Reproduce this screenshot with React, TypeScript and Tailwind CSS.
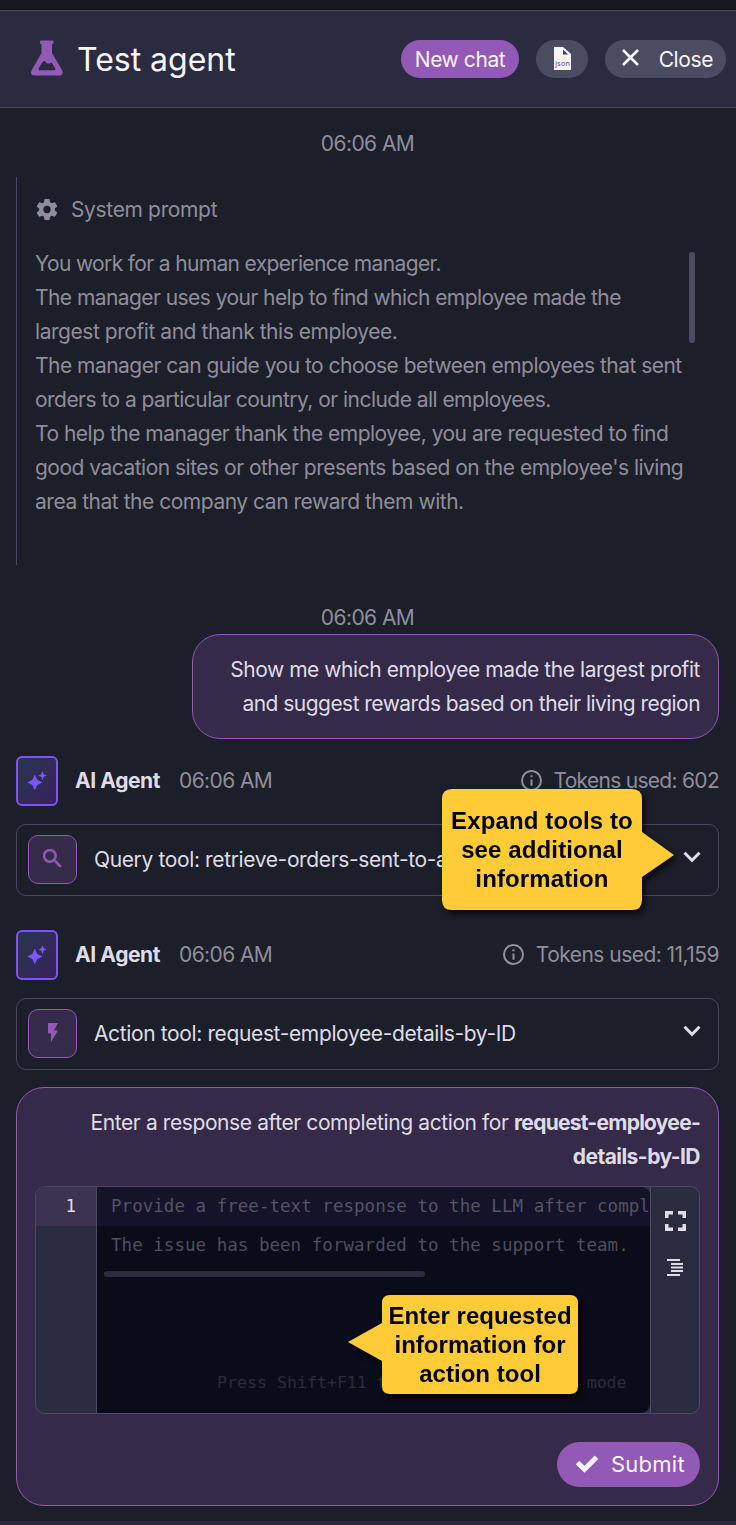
import type { ReactNode } from "react";

function Flask() {
  return (
    <svg viewBox="0 0 32 36" className="h-9 w-8" fill="#9259b6">
      <path
        fillRule="evenodd"
        d="M10 .5h11.500q1 0 1 1v1.700q0 .8-1 .8h-.5v9l10.200 17.500q1.600 5-3.200 5H3.500q-5 0-3-5L10.500 13V4h-.7q-.8 0-.8-.8V1.500q0-1 1-1zM13.300 21q-.9 0-1.600 1.100l-3.900 6q-.9 2.200.9 2.200h14.300q1.900 0 1-2.200l-3-4.900q-.7-1.100-1.500-.2-1.300 1.400-2.500.3-1.800.4-2.200-1.200-.5-1.100-1.500-1.100z"
      />
    </svg>
  );
}

function Gear() {
  return (
    <svg viewBox="2 2 20 20" className="ml-px h-[21px] w-[22px] shrink-0" fill="#908d9c">
      <path d="M12 15.5A3.500 3.500 0 0 1 8.500 12 3.500 3.500 0 0 1 12 8.500a3.500 3.500 0 0 1 3.500 3.500 3.500 3.500 0 0 1-3.500 3.500m7.430-2.530c.04-.32.07-.64.07-.97s-.03-.66-.07-1l2.110-1.630c.19-.15.24-.42.12-.64l-2-3.460c-.12-.22-.39-.31-.61-.22l-2.490 1c-.52-.39-1.060-.73-1.690-.98l-.37-2.650A.506.506 0 0 0 14 2h-4c-.25 0-.46.18-.5.42l-.37 2.650c-.63.25-1.170.59-1.690.98l-2.490-1c-.22-.09-.49 0-.61.22l-2 3.460c-.13.22-.07.49.12.64L4.570 11c-.04.34-.07.67-.07 1s.03.65.07.97l-2.110 1.660c-.19.15-.25.42-.12.64l2 3.460c.12.22.39.3.61.22l2.490-1.010c.52.4 1.060.74 1.690.99l.37 2.650c.04.24.25.42.5.42h4c.25 0 .46-.18.5-.42l.37-2.650c.63-.26 1.170-.59 1.690-.99l2.490 1.010c.22.08.49 0 .61-.22l2-3.460c.12-.22.07-.49-.12-.64z" />
    </svg>
  );
}

function Info() {
  return (
    <svg viewBox="2 2 20 20" className="mb-0.5 h-[21px] w-[21px]" fill="#908d9c">
      <path d="M11 9h2V7h-2m1 13c-4.410 0-8-3.590-8-8s3.590-8 8-8 8 3.590 8 8-3.590 8-8 8m0-18A10 10 0 0 0 2 12a10 10 0 0 0 10 10 10 10 0 0 0 10-10A10 10 0 0 0 12 2m-1 15h2v-6h-2z" />
    </svg>
  );
}

function AgentRow({ tokens }: { tokens: ReactNode }) {
  return (
    <div className="flex h-[50px] items-center">
      <div className="flex h-[50px] w-[42px] items-center justify-center rounded-[6px] border-2 border-[#7b55fb] bg-linear-to-br from-[#263551] to-[#38205a]">
        <svg viewBox="0 0 20 20" className="h-5 w-5" fill="#7b55fb">
          <path d="M7.800 3.500L10.300 9L15.500 11.500L10.300 13.900L7.800 19.300L5.300 13.900L.2 11.500L5.300 9zM15.500.2L16.800 3.200L19.800 4.500L16.800 5.800L15.500 8.900L14.200 5.800L11.200 4.500L14.200 3.200z" />
        </svg>
      </div>
      <span className="ml-[17px] w-[104px] text-[21px] font-bold tracking-[-0.4px] text-[#dfdce8]">AI Agent</span>
      <span className="text-[21px] tracking-[-0.6px]">06:06 AM</span>
      <div className="ml-auto flex items-center gap-3">
        <Info />
        {tokens}
      </div>
    </div>
  );
}

function ToolCard({ icon, label }: { icon: ReactNode; label: string }) {
  return (
    <div className="flex h-[72px] items-center rounded-[10px] border border-[#484860] pr-[17px] pl-[11px]">
      <div className="mb-0.5 flex h-[49px] w-[49px] shrink-0 items-center justify-center rounded-[10px] border border-[#9259b6] bg-[#352a48] pb-0.5">
        {icon}
      </div>
      <span className="ml-[17px] text-[21px] tracking-[-0.37px] whitespace-nowrap text-[#dfdce8]">{label}</span>
      <svg viewBox="0 0 18 12" className="mb-[7px] ml-auto h-3 w-[18px]" fill="none" stroke="#dfdce8" strokeWidth="3">
        <path d="M1.500 1.800L9 9.300L16.500 1.800" />
      </svg>
    </div>
  );
}

const promptLines = [
  { text: "You work for a human experience manager.", track: "tracking-[-0.65px]" },
  { text: "The manager uses your help to find which employee made the", track: "tracking-[-0.56px]" },
  { text: "largest profit and thank this employee.", track: "tracking-[-0.45px]" },
  { text: "The manager can guide you to choose between employees that sent", track: "tracking-[-0.52px]" },
  { text: "orders to a particular country, or include all employees.", track: "tracking-[-0.54px]" },
  { text: "To help the manager thank the employee, you are requested to find", track: "tracking-[-0.5px]" },
  { text: "good vacation sites or other presents based on the employee's living", track: "tracking-[-0.51px]" },
  { text: "area that the company can reward them with.", track: "tracking-[-0.47px]" },
];

export default function App() {
  return (
    <div className="relative flex h-[1525px] w-[736px] flex-col overflow-hidden bg-[#1c1e29] font-['Inter',sans-serif] text-[#908d9c]">
      <div className="h-2.5 shrink-0 bg-[#141620]" />
      <header className="flex h-[98px] shrink-0 items-center border-y border-[#484860] bg-[#2b2b3f] pr-2.5 pl-[31px] text-[#f7f4fc]">
        <div className="mb-0.5"><Flask /></div>
        <h1 className="mt-0.5 ml-3.5 text-[32px] leading-10 tracking-[-0.02px]">Test agent</h1>
        <button className="ml-auto h-[38px] w-[118px] rounded-full bg-[#9259b6] pt-px text-[21px] tracking-[-0.42px]">New chat</button>
        <button className="ml-[17px] flex h-[38px] w-[52px] items-center justify-center rounded-full bg-[#4b4b62]">
          <svg viewBox="0 0 17 23" className="mb-0.5 h-[23px] w-[17px]">
            <path d="M0 0h9l8 7v16H0z" fill="#f7f4fc" />
            <path d="M9 2.500v5h5z" fill="#3c3b5b" />
            <text x="1.300" y="18.500" fontSize="7" fontFamily="Noto Sans, sans-serif" fill="#4b4b62" textLength="14.500">json</text>
          </svg>
        </button>
        <button className="ml-[17px] flex h-[38px] w-[121px] items-center rounded-full bg-[#4b4b62] pr-[13px] pl-[17px]">
          <svg viewBox="0 0 17 17" className="mb-1 h-[17px] w-[17px]" stroke="#f7f4fc" strokeWidth="2.600">
            <path d="M1 1L16 16M16 1L1 16" />
          </svg>
          <span className="ml-auto pt-px text-[21px] tracking-[-0.4px]">Close</span>
        </button>
      </header>

      <main className="flex flex-col pr-[17px] pl-4 text-[21px] leading-[34px]">
        <div className="mt-[19px] h-[34px] text-center tracking-[-0.55px]">06:06 AM</div>

        <section className="mt-4 h-[388px] border-l border-[#484860] pr-[24px] pl-[18px]">
          <div className="flex h-[69px] items-center pb-1">
            <Gear />
            <span className="ml-[13px] tracking-[-0.35px]">System prompt</span>
          </div>
          <div className="flex justify-between">
            <div className="pt-px whitespace-nowrap">
              {promptLines.map((l) => (
                <div key={l.text} className={l.track}>{l.text}</div>
              ))}
            </div>
            <div className="mt-1.5 h-[91px] w-1.5 shrink-0 rounded-full bg-[#4b4b62]" />
          </div>
        </section>

        <div className="mt-9 h-[33px] text-center tracking-[-0.55px]">06:06 AM</div>
        <div className="h-[105px] w-[527px] self-end rounded-[28px] border border-[#9259b6] bg-[#352a48] pt-[18px] pr-[18px] text-right text-[#dfdce8]">
          <div className="tracking-[-0.44px]">Show me which employee made the largest profit</div>
          <div className="tracking-[-0.54px]">and suggest rewards based on their living region</div>
        </div>

        <div className="mt-[17px] flex flex-col gap-[18px]">
          <AgentRow tokens={<span className="tracking-[-0.71px]">Tokens used: 602</span>} />
          <ToolCard
            label="Query tool: retrieve-orders-sent-to-a-country"
            icon={
              <svg viewBox="3 3 18 18" className="h-[19px] w-[19px]" fill="#9259b6" stroke="#9259b6" strokeWidth="0.5">
                <path d="M15.500 14h-.79l-.28-.27A6.470 6.470 0 0 0 16 9.500 6.500 6.500 0 1 0 9.500 16c1.610 0 3.090-.59 4.230-1.570l.27.28v.79l5 4.990L20.490 19zm-6 0C7.010 14 5 11.990 5 9.500S7.010 5 9.500 5 14 7.010 14 9.500 11.990 14 9.500 14" />
              </svg>
            }
          />
        </div>
        <div className="mt-[34px] flex flex-col gap-[18px]">
          <AgentRow tokens={<span className="tracking-[-0.54px]">Tokens used: 11,159</span>} />
          <ToolCard
            label="Action tool: request-employee-details-by-ID"
            icon={
              <svg viewBox="0 0 10 19" className="h-[19px] w-2.5" fill="#9259b6">
                <path d="M0 0v10.500h3V19L10 7.500H6L10 0z" />
              </svg>
            }
          />
        </div>

        <section className="mt-[17px] flex h-[419px] flex-col rounded-[28px] border border-[#9259b6] bg-[#352a48] px-[18px] pt-[18px] text-[#dfdce8]">
          <div className="text-right whitespace-nowrap">
            <div><span className="tracking-[-0.4px]">Enter a response after completing action for </span><b className="tracking-[-0.74px]">request-employee-</b></div>
            <div><b className="tracking-[-0.54px]">details-by-ID</b></div>
          </div>
          <div className="mt-3 flex h-[228px] overflow-hidden rounded-[10px] border border-[#4b4a62] font-['DejaVu_Sans_Mono',monospace]">
            <div className="w-[61px] shrink-0 border-r border-[#4b4a62] bg-[#2b2b3f]">
              <div className="h-[39px] bg-[#3b3350] pr-5 text-right text-[17.5px] leading-[39px]">1</div>
            </div>
            <div className="flex w-[553px] flex-col overflow-hidden rounded-r-[9px] bg-[#0a0c19] text-[17.5px] leading-[39px] whitespace-pre">
              <div className="h-[39px] bg-[#151329] pl-3.5 tracking-[0.03px] text-[#555263]">Provide a free-text response to the LLM after completing</div>
              <div className="h-[39px] pl-3.5 tracking-[0.03px] text-[#4f4f5e]">The issue has been forwarded to the support team.</div>
              <div className="mt-1.5 ml-[7px] h-1.5 w-[321px] rounded-full bg-[#2b2b3f]" />
              <div className="mt-[86px] ml-[120px] text-[16.600px] text-[#2c2c3a]">Press Shift+F11 to enter full screen mode</div>
            </div>
            <div className="flex flex-1 flex-col items-center border-l border-[#4b4a62] bg-[#2b2b3f] pt-6">
              <svg viewBox="0 0 21 20" className="h-5 w-[21px]" fill="none" stroke="#dfdce8" strokeWidth="3.500">
                <path d="M1.750 7V1.750H8M13 1.750h6.250V7M19.250 13v5.250H13M8 18.250H1.750V13" />
              </svg>
              <svg viewBox="0 0 16 17" className="mt-7 h-[17px] w-4" fill="#dfdce8">
                <path d="M0 0h13v2H0zM4 4h12v2H4zM4 7.500h12v2H4zM4 11h12v2H4zM0 15h13v2H0z" />
              </svg>
            </div>
          </div>
          <button className="mt-7 flex h-[45px] w-[143px] items-center self-end rounded-full bg-[#9259b6] pb-px pl-[18px] text-[#f7f4fc]">
            <svg viewBox="0 0 24 18" className="h-[18px] w-6" fill="none" stroke="#f7f4fc" strokeWidth="5">
              <path d="M2.500 7.500L9.500 14.300L21.500 2.300" />
            </svg>
            <span className="ml-3 text-[22px] tracking-[0.25px]">Submit</span>
          </button>
        </section>
      </main>
      <div className="mt-[15px] h-1 shrink-0 bg-[#2b2b3f]" />

      <div className="absolute top-[789px] left-[442px] h-[121px] w-[232px] drop-shadow-[3px_4px_3px_rgba(0,0,0,0.65)]">
        <svg viewBox="0 0 232 121" className="absolute inset-0 h-full w-full">
          <path d="M10 0H190Q200 0 200 10V43L232 66L200 88V111Q200 121 190 121H10Q0 121 0 111V10Q0 0 10 0z" fill="#ffcc38" />
        </svg>
        <div className="relative w-[200px] pt-[17px] text-center font-['Liberation_Sans',sans-serif] text-2xl leading-[29px] font-bold tracking-[0.12px] whitespace-nowrap text-black">
          <div>Expand tools to</div><div>see additional</div><div>information</div>
        </div>
      </div>

      <div className="absolute top-[1295px] left-[348px] h-[99px] w-[230px] drop-shadow-[3px_4px_3px_rgba(0,0,0,0.65)]">
        <svg viewBox="0 0 230 99" className="absolute inset-0 h-full w-full">
          <path d="M42 0H222Q230 0 230 8V91Q230 99 222 99H42Q34 99 34 91V66L0 47L34 28V8Q34 0 42 0z" fill="#ffcc38" />
        </svg>
        <div className="relative ml-[34px] w-[196px] pt-[6px] text-center font-['Liberation_Sans',sans-serif] text-2xl leading-[29px] font-bold tracking-[0.03px] whitespace-nowrap text-black">
          <div>Enter requested</div><div>information for</div><div>action tool</div>
        </div>
      </div>
    </div>
  );
}
